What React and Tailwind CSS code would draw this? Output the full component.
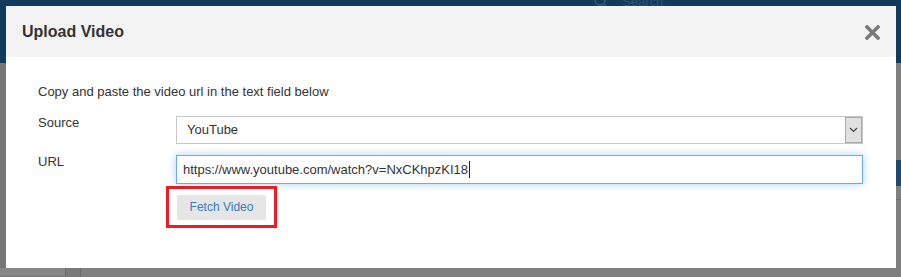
import React from "react";

export default function App() {
  return (
    <div className="relative w-[901px] h-[277px] overflow-hidden bg-[#7f7f7f]" style={{ fontFamily: '"Liberation Sans", Arial, sans-serif' }}>
      {/* background page (dimmed) */}
      <div className="flex flex-col h-full">
        <div className="h-[63px] bg-[#113a5c] flex items-start">
          <div className="ml-[594px] mt-[-8px] flex items-center gap-[12px] text-[#2d5676] text-[13px]">
            <svg width="16" height="16" viewBox="0 0 16 16" fill="none" stroke="#2d5676" strokeWidth="2"><circle cx="6" cy="6" r="5" /><path d="M10 10l5 5" /></svg>
            <span>Search</span>
          </div>
        </div>
        <div className="flex-1 flex">
          <div className="w-[6px] bg-[#767676]" />
          <div className="flex-1" />
          <div className="w-[5px] flex flex-col">
            <div className="h-[97px]" />
            <div className="h-[26px] bg-[#1f4a6d]" />
            <div className="h-[14px] border-b border-[#6f6f6f]" />
          </div>
        </div>
        <div className="h-[9px] flex">
          <div className="w-[65px] bg-[#878787] mb-[2px]" />
          <div className="w-[15px] bg-[#7a7a7a] border-l border-[#6a6a6a]" />
          <div className="flex-1 border-l border-[#6a6a6a]" />
        </div>
      </div>

      {/* modal */}
      <div className="absolute left-[6px] top-[6px] w-[890px] h-[262px] bg-white flex flex-col">
        <div className="h-[51px] bg-[#f3f3f3] flex items-center justify-between pl-[16px] pr-[16px]">
          <h4 className="text-[16px] font-bold text-[#333] mt-[1px]">Upload Video</h4>
          <svg width="15" height="15" viewBox="0 0 15 15" className="mt-[1px]">
            <path d="M2 2L13 13M13 2L2 13" stroke="#7b7b7b" strokeWidth="3.6" strokeLinecap="square" />
          </svg>
        </div>
        <div className="flex flex-col pl-[32px] pr-[33px] pt-[27px] text-[13px] text-[#333]">
          <p className="leading-[15px]">Copy and paste the video url in the text field below</p>
          <div className="flex mt-[17px]">
            <label className="w-[138px] leading-[15px] mt-[-1px]">Source</label>
            <div className="flex-1 h-[28px] border border-[#c8c8c8] flex items-center justify-between">
              <span className="pl-[10px] text-[#333]">YouTube</span>
              <div className="w-[17px] h-[26px] bg-[#e1e1e1] border border-[#a9a9a9] flex items-center justify-center mr-[0px]">
                <svg width="9" height="6" viewBox="0 0 9 6"><path d="M1 1l3.5 3.5L8 1" stroke="#444" strokeWidth="1.2" fill="none" /></svg>
              </div>
            </div>
          </div>
          <div className="flex mt-[11px]">
            <label className="w-[138px] leading-[15px] mt-[-1px]">URL</label>
            <div className="flex-1 h-[29px] border border-[#66afe9] shadow-[0_0_8px_rgba(102,175,233,0.55)] flex items-center pl-[6px]">
              <span className="text-[#333] border-r border-[#222] pr-[1px] leading-[17px]">https://www.youtube.com/watch?v=NxCKhpzKI18</span>
            </div>
          </div>
          <div className="flex mt-[2px]">
            <div className="w-[128px]" />
            <div className="w-[111px] h-[42px] border-[3px] border-[#ec1c24] flex items-center justify-center">
              <button className="w-[89px] h-[25px] bg-[#e6e6e6] rounded-[2px] text-[12px] text-[#3a7bbf]">Fetch Video</button>
            </div>
          </div>
        </div>
      </div>
    </div>
  );
}
